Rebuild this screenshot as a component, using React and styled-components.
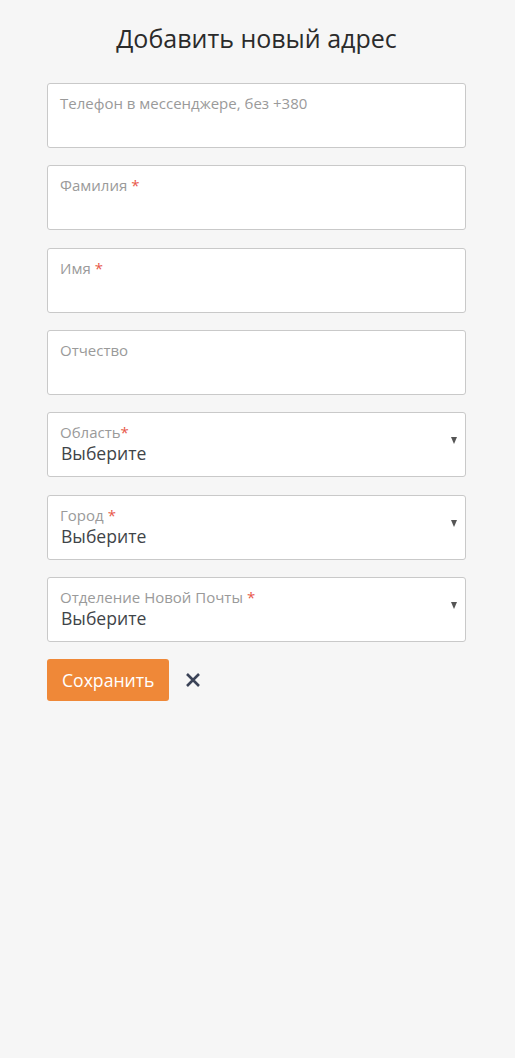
import React from "react";
import styled, { createGlobalStyle } from "styled-components";

const GlobalStyle = createGlobalStyle`
    html, body {
        margin: 0;
        padding: 0;
        background: #f6f6f6;
        font-family: "Open Sans", "Liberation Sans", sans-serif;
    }
`;

const Wrapper = styled.div`
    min-height: 1058px;
    background: #f6f6f6;
`;

const Form = styled.form`
    width: 419px;
    margin: 0 49px 0 47px;
    padding-top: 20px;
    display: flex;
    flex-direction: column;
`;

const Title = styled.h1`
    margin: 0 0 27px;
    font-size: 25px;
    line-height: 36px;
    font-weight: 400;
    color: #2b2b2b;
    text-align: center;
`;

const Fields = styled.div`
    display: flex;
    flex-direction: column;
    gap: 17.33px;
`;

const Field = styled.div`
    position: relative;
    height: 65px;
    box-sizing: border-box;
    background: #fff;
    border: 1px solid #c9c9c9;
    border-radius: 3px;
    padding: 9px 12px 0;
    display: flex;
    flex-direction: column;
`;

const Label = styled.span`
    font-size: 15px;
    line-height: 20px;
    color: #9a9a9a;
`;

const Required = styled.span`
    color: #e8584a;
    margin-left: ${props => (props.tight ? "0" : "4px")};
`;

const Value = styled.span`
    font-size: 17.6px;
    line-height: 22px;
    color: #3f4448;
    padding-left: 1px;
`;

const Arrow = styled.span`
    position: absolute;
    right: 8px;
    top: 24px;
    width: 0;
    height: 0;
    border-left: 3.5px solid transparent;
    border-right: 3.5px solid transparent;
    border-top: 7px solid #555;
`;

const Actions = styled.div`
    display: flex;
    align-items: center;
    gap: 15px;
    margin-top: 17px;
`;

const SaveButton = styled.button`
    height: 42px;
    padding: 0 15px;
    border: none;
    border-radius: 3px;
    background: #ef8838;
    color: #fff;
    font-family: inherit;
    font-size: 17.6px;
    cursor: pointer;
`;

const CloseButton = styled.button`
    width: 18px;
    height: 18px;
    padding: 0;
    border: none;
    background: none;
    display: flex;
    align-items: center;
    justify-content: center;
    cursor: pointer;
`;

const fields = [
    { label: "Телефон в мессенджере, без +380" },
    { label: "Фамилия", required: true },
    { label: "Имя", required: true },
    { label: "Отчество" },
    { label: "Область", required: true, tight: true, select: true },
    { label: "Город", required: true, select: true },
    { label: "Отделение Новой Почты", required: true, select: true },
];

const App = () => (
    <Wrapper>
        <GlobalStyle />
        <Form onSubmit={e => e.preventDefault()}>
            <Title>Добавить новый адрес</Title>
            <Fields>
                {fields.map(f => (
                    <Field key={f.label}>
                        <Label>
                            {f.label}
                            {f.required && <Required tight={f.tight}>*</Required>}
                        </Label>
                        {f.select && <Value>Выберите</Value>}
                        {f.select && <Arrow />}
                    </Field>
                ))}
            </Fields>
            <Actions>
                <SaveButton type="submit">Сохранить</SaveButton>
                <CloseButton type="button" aria-label="Закрыть">
                    <svg width="16" height="16" viewBox="0 0 16 16">
                        <path d="M2 2L14 14M14 2L2 14" stroke="#3b4357" strokeWidth="2.6" />
                    </svg>
                </CloseButton>
            </Actions>
        </Form>
    </Wrapper>
);

export default App;
